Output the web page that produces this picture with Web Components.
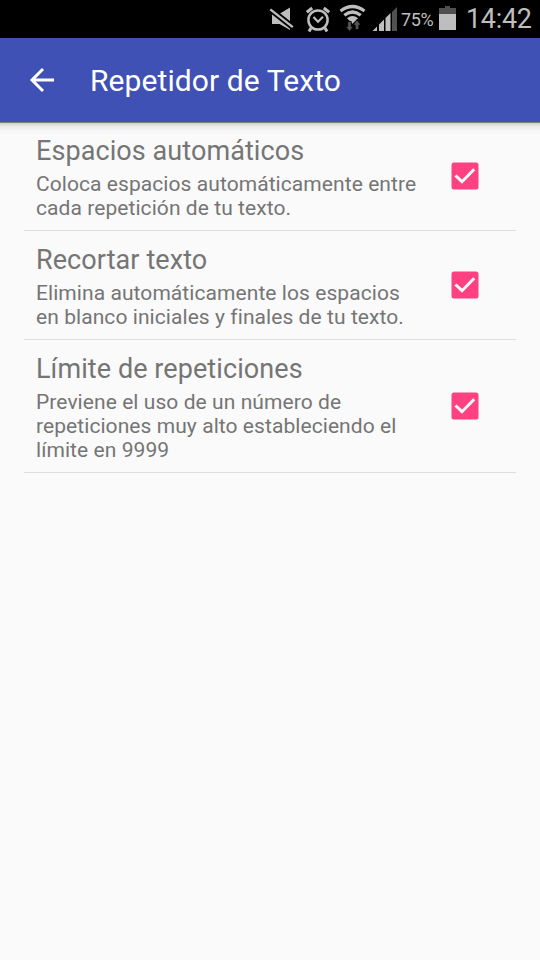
<!DOCTYPE html>
<html lang="es">
<head>
<meta charset="utf-8">
<title>Repetidor de Texto</title>
<style>
  body {
    margin: 0;
    background: #fafafa;
    font-family: Roboto, "Noto Sans", sans-serif;
  }
</style>
</head>
<body>
<settings-screen></settings-screen>

<script>
class StatusBar extends HTMLElement {
  constructor() {
    super();
    this.attachShadow({ mode: "open" });
  }

  connectedCallback() {
    const battery = this.getAttribute("battery") || "";
    const time = this.getAttribute("time") || "";

    this.shadowRoot.innerHTML = `
      <style>
        :host {
          display: flex;
          justify-content: flex-end;
          align-items: flex-start;
          box-sizing: border-box;
          height: 38px;
          padding-right: 8px;
          background: #000;
          color: #bebebe;
        }

        svg {
          display: block;
          flex: none;
        }

        .battery {
          width: 33px;
          margin: 0 5px 0 4px;
          font-size: 18px;
          line-height: 40px;
          letter-spacing: -0.4px;
          white-space: nowrap;
        }

        .time {
          width: 66px;
          margin-left: 10px;
          font-size: 27px;
          line-height: 38px;
          letter-spacing: -0.3px;
          white-space: nowrap;
        }
      </style>

      <!-- muted -->
      <svg width="36" height="38" viewBox="268 0 36 38">
        <path fill="#bebebe" d="M272 13.500h8l10-6v22.500l-10.500-6h-7.500z"/>
        <path stroke="#000" stroke-width="6" d="M268 7.500l27 21.300"/>
        <path stroke="#bebebe" stroke-width="2.300" d="M270.300 9.300l22.500 17.800"/>
      </svg>
      <!-- alarm -->
      <svg width="34" height="38" viewBox="304 0 34 38" fill="none" stroke="#bebebe">
        <circle cx="318" cy="20" r="9.600" stroke-width="2.500"/>
        <path stroke-width="3" d="M306.800 12.200l5.400-4.200M329.200 12.200l-5.400-4.200M311 28l-2 3.500M325 28l2 3.500"/>
        <path stroke-width="2.200" d="M313.500 17l4.500 4.700 5-5"/>
      </svg>
      <!-- wifi -->
      <svg width="34" height="38" viewBox="338 0 34 38" fill="none">
        <g stroke="#bebebe" stroke-width="3.200">
          <path d="M340.500 11q12-9 24 0"/>
          <path d="M344.300 15.200q8.200-6.400 16.400 0"/>
        </g>
        <path fill="#bebebe" d="M347 18.200q5.500-4.400 11 0l-5.500 5.500z"/>
        <path fill="#555" stroke="#000" stroke-width=".8" d="M347.700 21.500h3.600v5h2.200l-4 5-4-5h2.200zM355.200 29.500v-4.500h-2.200l4-5.200 4 5.200h-2.200v4.500z"/>
      </svg>
      <!-- mobile signal -->
      <svg width="25" height="38" viewBox="372 0 25 38">
        <path fill="#bebebe" d="M372.500 31l4.500-4.500v4.500zM379 31v-6.500l5-5v11.500zM385.500 31v-13l5-5v18z"/>
        <path fill="#505050" d="M392 31v-19l5-5v24z"/>
      </svg>
      <span class="battery">${battery}</span>
      <svg width="17" height="38" viewBox="439 0 17 38">
        <path fill="#505050" d="M439 8h6v-2h5v2h6v6h-17z"/>
        <path fill="#bebebe" d="M439 14h17v16h-17z"/>
      </svg>
      <span class="time">${time}</span>
    `;
  }
}

class AppBar extends HTMLElement {
  constructor() {
    super();
    this.attachShadow({ mode: "open" });
    this.shadowRoot.innerHTML = `
      <style>
        :host {
          display: flex;
          align-items: center;
          height: 84px;
          position: relative;
          background: #3f51b5;
          color: #fff;
          font-size: 30px;
          letter-spacing: 0.09px;
        }

        :host::after {
          content: "";
          position: absolute;
          top: 100%;
          left: 0;
          right: 0;
          height: 12px;
          background: linear-gradient(#808080 0 1px, #cfcfcf 1px, #e9e9e9 4px, #f5f5f5 8px, #fafafa);
        }

        svg {
          flex: none;
          margin: 0 34px 0 28px;
        }
      </style>

      <svg width="28" height="28" fill="none" stroke="#fff" stroke-width="3">
        <path d="M26 14H4M15 3L4 14l11 11"/>
      </svg>
      <slot></slot>
    `;
  }
}

class SettingRow extends HTMLElement {
  constructor() {
    super();
    this.attachShadow({ mode: "open" });
    this.shadowRoot.innerHTML = `
      <style>
        :host {
          display: flex;
          align-items: center;
          margin: 0 24px;
          padding: 12px 37px 10px 12px;
          border-bottom: 1px solid #dedede;
          color: #757575;
        }

        .text {
          flex: 1;
          white-space: nowrap;
        }

        .title {
          font-size: 27px;
          line-height: 34px;
          padding-bottom: 4px;
          letter-spacing: 0.08px;
        }

        .summary {
          font-size: 21px;
          line-height: 24px;
          letter-spacing: 0.07px;
        }

        svg {
          display: block;
          flex: none;
          position: relative;
          top: -1px;
        }
      </style>

      <div class="text">
        <div class="title"><slot name="title"></slot></div>
        <div class="summary"><slot></slot></div>
      </div>
      <svg width="28" height="28">
        <rect x=".5" y=".5" width="27" height="27" rx="2.500" fill="#ff4081"/>
        <path d="M4.500 13.500l6.500 6.200L23.200 7.200" fill="none" stroke="#fafafa" stroke-width="3"/>
      </svg>
    `;
  }
}

class SettingsScreen extends HTMLElement {
  constructor() {
    super();
    this.attachShadow({ mode: "open" });
    this.shadowRoot.innerHTML = `
      <style>
        :host {
          display: block;
          height: 960px;
          overflow: hidden;
        }
      </style>

      <status-bar battery="75%" time="14:42"></status-bar>
      <app-bar>Repetidor de Texto</app-bar>
      <setting-row>
        <span slot="title">Espacios automáticos</span>
        Coloca espacios automáticamente entre<br>cada repetición de tu texto.
      </setting-row>
      <setting-row>
        <span slot="title">Recortar texto</span>
        Elimina automáticamente los espacios<br>en blanco iniciales y finales de tu texto.
      </setting-row>
      <setting-row>
        <span slot="title">Límite de repeticiones</span>
        Previene el uso de un número de<br>repeticiones muy alto estableciendo el<br>límite en 9999
      </setting-row>
    `;
  }
}

customElements.define("status-bar", StatusBar);
customElements.define("app-bar", AppBar);
customElements.define("setting-row", SettingRow);
customElements.define("settings-screen", SettingsScreen);
</script>
</body>
</html>
